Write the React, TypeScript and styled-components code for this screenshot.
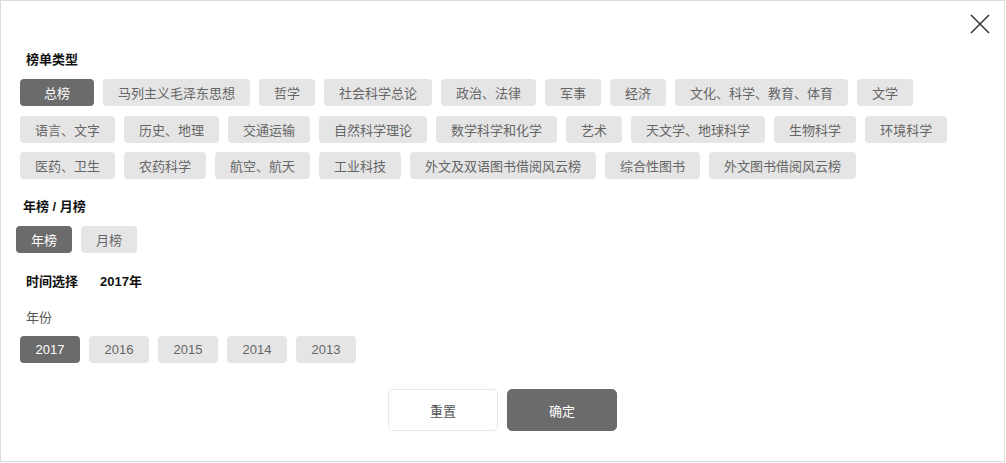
import React, { useState } from "react"
import styled, { createGlobalStyle } from "styled-components"

const GlobalStyle = createGlobalStyle`
    body {
        margin: 0;
        background: #fff;
        font-family: "Liberation Sans", "Noto Sans CJK SC", sans-serif;
    }
`;

const Panel = styled.div`
    position: relative;
    box-sizing: border-box;
    width: 1005px;
    height: 462px;
    border: 1px solid #dcdcdc;
    padding: 49px 0 0 19px;
    display: flex;
    flex-direction: column;
`;

const Close = styled.button`
    position: absolute;
    top: 12px;
    right: 13px;
    width: 22px;
    height: 22px;
    padding: 0;
    border: none;
    background: none;
    cursor: pointer;
`;

const Heading = styled.div<{ $indent?: number; $top?: number }>`
    display: flex;
    gap: 22px;
    margin: ${p => p.$top || 0}px 0 0 ${p => p.$indent || 0}px;
    font-size: 13px;
    line-height: 20px;
    font-weight: bold;
    color: #111;
`;

const Label = styled.div<{ $top?: number }>`
    margin: ${p => p.$top || 0}px 0 0 6px;
    font-size: 13px;
    line-height: 20px;
    color: #555;
`;

const ChipList = styled.div<{ $indent?: number; $top?: number }>`
    display: flex;
    flex-wrap: wrap;
    row-gap: 9.5px;
    column-gap: 9px;
    margin: ${p => p.$top || 0}px 0 0 ${p => p.$indent || 0}px;
    max-width: 940px;
`;

const Chip = styled.div<{ $active?: boolean; $width?: number }>`
    box-sizing: border-box;
    height: 27px;
    padding: 0 15px;
    ${p => p.$width ? `width: ${p.$width}px;` : ""}
    display: flex;
    align-items: center;
    justify-content: center;
    border-radius: 4px;
    font-size: 13px;
    white-space: nowrap;
    cursor: pointer;
    background: ${p => p.$active ? "#6b6b6b" : "#e5e5e5"};
    color: ${p => p.$active ? "#fff" : "#666"};
`;

const Footer = styled.div`
    display: flex;
    justify-content: center;
    gap: 9px;
    margin: 26px 0 0 -19px;
`;

const ActionButton = styled.button<{ $primary?: boolean }>`
    box-sizing: border-box;
    width: 110px;
    height: 42px;
    border-radius: 5px;
    font-family: inherit;
    font-size: 13px;
    cursor: pointer;
    border: 1px solid ${p => p.$primary ? "#6b6b6b" : "#e8e8e8"};
    background: ${p => p.$primary ? "#6b6b6b" : "#fff"};
    color: ${p => p.$primary ? "#fff" : "#555"};
`;

const categories = [
    "总榜", "马列主义毛泽东思想", "哲学", "社会科学总论", "政治、法律", "军事", "经济",
    "文化、科学、教育、体育", "文学", "语言、文字", "历史、地理", "交通运输", "自然科学理论",
    "数学科学和化学", "艺术", "天文学、地球科学", "生物科学", "环境科学", "医药、卫生",
    "农药科学", "航空、航天", "工业科技", "外文及双语图书借阅风云榜", "综合性图书", "外文图书借阅风云榜",
];

const years = ["2017", "2016", "2015", "2014", "2013"]

export default function App() {
    const [cat, setCat] = useState(0)
    const [period, setPeriod] = useState(0)
    const [year, setYear] = useState(0)

    return (
        <>
            <GlobalStyle />
            <Panel>
                <Close aria-label="关闭">
                    <svg width="22" height="22" viewBox="0 0 22 22">
                        <path d="M2 2 L20 20 M20 2 L2 20" stroke="#333" strokeWidth="1.5" fill="none" />
                    </svg>
                </Close>

                <Heading $indent={6}>榜单类型</Heading>
                <ChipList $top={9}>
                    {categories.map((c, i) => (
                        <Chip key={c} $active={cat === i} $width={i === 0 ? 74 : undefined} onClick={() => setCat(i)}>{c}</Chip>
                    ))}
                </ChipList>

                <Heading $indent={3} $top={18}>年榜 / 月榜</Heading>
                <ChipList $indent={-4} $top={9}>
                    {["年榜", "月榜"].map((p, i) => (
                        <Chip key={p} $active={period === i} $width={56} onClick={() => setPeriod(i)}>{p}</Chip>
                    ))}
                </ChipList>

                <Heading $indent={6} $top={19}>
                    <span>时间选择</span>
                    <span>{years[year]}年</span>
                </Heading>
                <Label $top={16}>年份</Label>
                <ChipList $top={8}>
                    {years.map((y, i) => (
                        <Chip key={y} $active={year === i} $width={60} onClick={() => setYear(i)}>{y}</Chip>
                    ))}
                </ChipList>

                <Footer>
                    <ActionButton>重置</ActionButton>
                    <ActionButton $primary>确定</ActionButton>
                </Footer>
            </Panel>
        </>
    )
}
